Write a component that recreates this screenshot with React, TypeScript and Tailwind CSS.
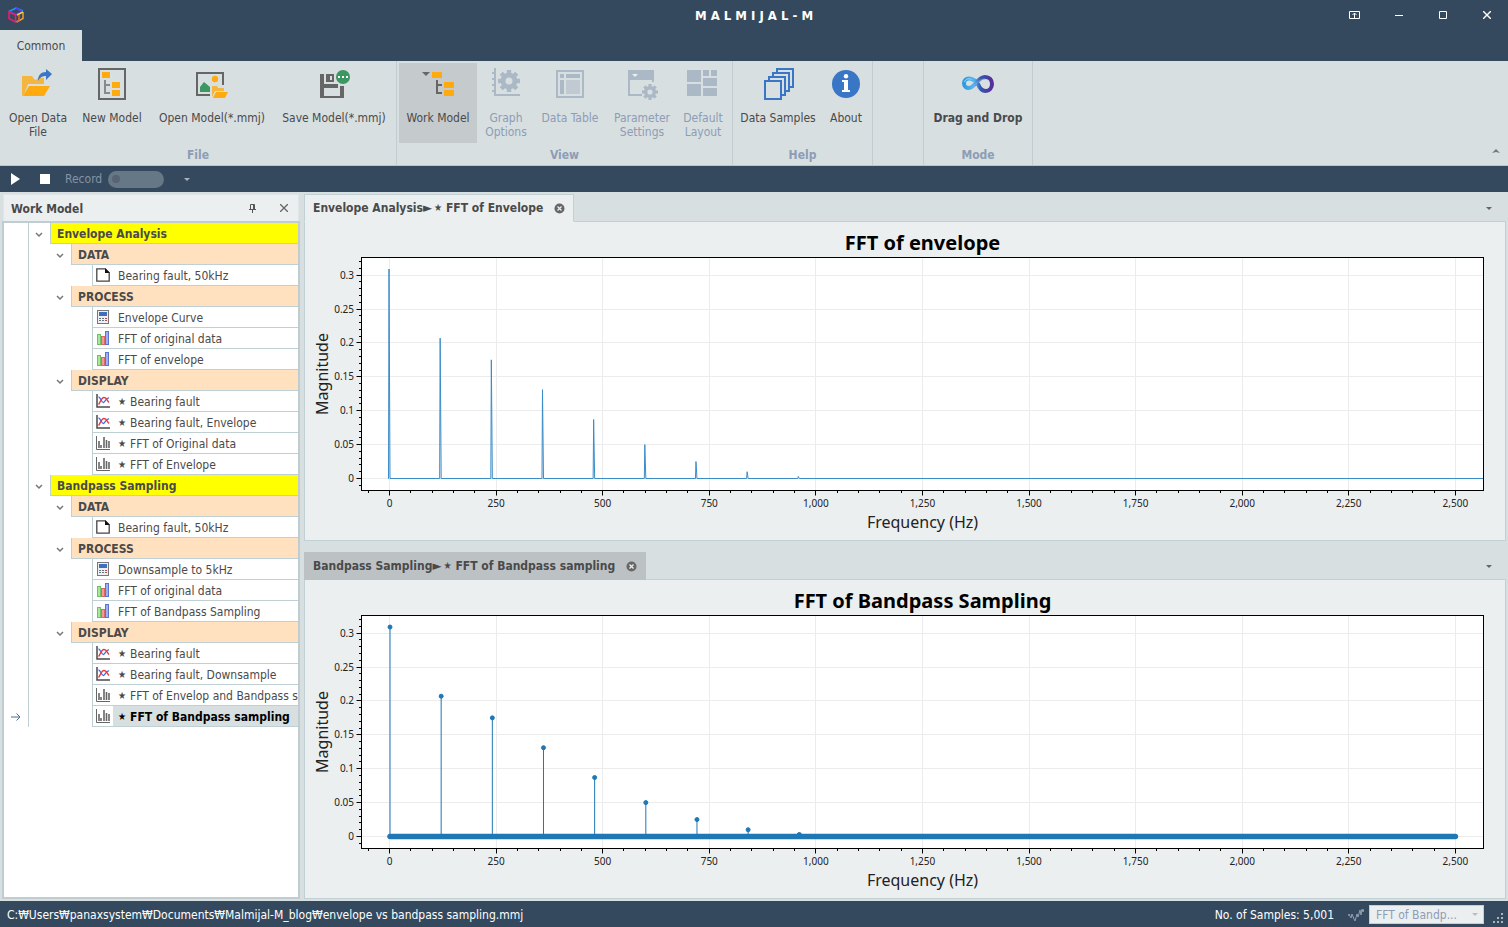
import { useEffect, useRef, useState } from "react";
import type { ReactNode } from "react";

/* ---------- ribbon icons ---------- */

function Icon32({ children }: { children: ReactNode }) {
  return (
    <svg width="32" height="32" viewBox="0 0 32 32" aria-hidden="true">
      {children}
    </svg>
  );
}

function Gear({ cx, cy, r, hole }: { cx: number; cy: number; r: number; hole: number }) {
  const ring = r * 0.76;
  return (
    <g fill="#abb8c6">
      <circle cx={cx} cy={cy} r={(ring + hole) / 2} fill="none" stroke="#abb8c6" strokeWidth={ring - hole} />
      {[0, 45, 90, 135, 180, 225, 270, 315].map((a) => (
        <rect
          key={a}
          x={cx - r * 0.2}
          y={cy - r}
          width={r * 0.4}
          height={r * 0.36}
          transform={`rotate(${a} ${cx} ${cy})`}
        />
      ))}
    </g>
  );
}

const OpenDataIcon = () => (
  <Icon32>
    <path d="M0 8h10l2 3 2 1 2-2h6v6H6L2 27 0 28z" fill="#f5b640" />
    <path d="M7 18h21l-6 10H1z" fill="#ffab0f" />
    <path d="M16 13c0-6 3-9 8-9V1l6 5-6 6V8c-3 0-6 1-8 5z" fill="#3a76c6" />
  </Icon32>
);

const NewModelIcon = () => (
  <Icon32>
    <rect x="3" y="1" width="26" height="30" fill="none" stroke="#666" strokeWidth="2" />
    <path d="M6 4h8v6H6zM16 14h8v6h-8zM16 22h8v6h-8z" fill="#ffab0f" />
    <path d="M9 12v13h5M9 17h5" fill="none" stroke="#8a8a8a" strokeWidth="2" />
  </Icon32>
);

const OpenModelIcon = () => (
  <Icon32>
    <path d="M14 27H1V5h26v12" fill="none" stroke="#666" strokeWidth="2" />
    <circle cx="19" cy="11" r="3.2" fill="#ffab0f" />
    <path d="M4 24v-5l4-5 6 5v5z" fill="#3c9763" />
    <path d="M16 18h5l1 2h6v3h-9l-3 6z" fill="#f5b640" />
    <path d="M20 24h12l-3 6H17z" fill="#ffab0f" />
  </Icon32>
);

const SaveModelIcon = () => (
  <Icon32>
    <path d="M2 6h4v10h14v4H6v8h16V18h4v12H2z" fill="#666" />
    <path d="M8 6h8v8H8zM12 8v4h2V8z" fill="#666" fillRule="evenodd" />
    <circle cx="25" cy="9" r="7" fill="#3c9763" />
    <path d="M20 8h2v2h-2zM24 8h2v2h-2zM28 8h2v2h-2z" fill="#fff" />
  </Icon32>
);

const WorkModelIcon = () => (
  <Icon32>
    <path d="M0 4h8L4 8z" fill="#666" />
    <path d="M10 4h10v6H10zM22 14h10v6H22zM22 22h10v6H22z" fill="#ffab0f" />
    <path d="M15 12v13h5M15 17h5" fill="none" stroke="#666" strokeWidth="2" />
  </Icon32>
);

const GraphOptionsIcon = () => (
  <Icon32>
    <path d="M5 0v27h25M2 5h3M2 11h3M2 17h3M2 23h3" fill="none" stroke="#abb8c6" strokeWidth="2" />
    <Gear cx={19} cy={13} r={11} hole={3.5} />
  </Icon32>
);

const DataTableIcon = () => (
  <Icon32>
    <rect x="3" y="3" width="26" height="26" fill="none" stroke="#abb8c6" strokeWidth="2" />
    <path d="M6 6h4v4H6zM12 6h14v4H12zM6 12h4v14H6z" fill="#abb8c6" />
    <path d="M12 12h14v14H12z" fill="#c1cad3" />
  </Icon32>
);

const ParameterIcon = () => (
  <Icon32>
    <path d="M2 2h26v12h-2v-2H4v14h12v2H2z" fill="#abb8c6" />
    <path d="M6 6h6l-3 3z" fill="#eceff0" />
    <Gear cx={24} cy={24} r={8} hole={2.6} />
  </Icon32>
);

const LayoutIcon = () => (
  <Icon32>
    <path
      d="M0 2h14v12H0zM0 16h14v12H0zM16 2h6v6h-6zM24 2h6v6h-6zM16 10h14v8H16zM16 20h14v8H16z"
      fill="#abb8c6"
    />
  </Icon32>
);

const SamplesIcon = () => (
  <Icon32>
    {[14, 10, 6, 2].map((x) => (
      <rect key={x} x={x + 1} y={15 - x} width="16" height="18" fill="#d8dfe1" stroke="#3a76c6" strokeWidth="2" />
    ))}
  </Icon32>
);

const AboutIcon = () => (
  <Icon32>
    <circle cx="16" cy="16" r="14" fill="#3a76c6" />
    <circle cx="16" cy="8.2" r="2.2" fill="#fff" />
    <path d="M12 12h6v10h2v2h-8v-2h2v-8h-2z" fill="#fff" />
  </Icon32>
);

const InfinityIcon = () => (
  <Icon32>
    <defs>
      <linearGradient id="loop" x1="0" x2="1" y1="0" y2="0">
        <stop offset="0" stopColor="#2f9be0" />
        <stop offset="0.35" stopColor="#5bb6ec" />
        <stop offset="0.6" stopColor="#3556ad" />
        <stop offset="1" stopColor="#5a2c9c" />
      </linearGradient>
    </defs>
    <path
      d="M16 16C12.500 11.500 10 10.500 7 10.500c-3.500 0-5 2.500-5 5s2 4.500 5 4.500c6 0 8-11 16-11 4.500 0 7 3 7 7s-2.500 7-6.500 7c-3.500 0-6-3-7.500-7z"
      fill="none"
      stroke="url(#loop)"
      strokeWidth="4"
    />
    <path d="M2.500 14c1-3 4-4 7-2.500" fill="none" stroke="#a5dbf7" strokeWidth="1" />
    <path d="M12 19c3-4 6-8 11-8" fill="none" stroke="#8d9fe0" strokeWidth="1" />
  </Icon32>
);

/* ---------- ribbon ---------- */

type RibbonButtonProps = {
  icon: ReactNode;
  lines: string[];
  width: string;
  disabled?: boolean;
  pressed?: boolean;
  bold?: boolean;
};

function RibbonButton({ icon, lines, width, disabled, pressed, bold }: RibbonButtonProps) {
  return (
    <button
      type="button"
      disabled={disabled}
      aria-pressed={pressed}
      className={`flex h-20 shrink-0 flex-col items-center pt-[5px] leading-[14px] ${width} ${
        pressed ? "bg-[#c5cacd]" : ""
      } ${disabled ? "text-[#8c9db5]" : "text-[#4a4a4a]"} ${bold ? "font-bold" : ""}`}
    >
      {icon}
      <span className="mt-[11px] flex flex-col items-center whitespace-nowrap">
        {lines.map((l) => (
          <span key={l}>{l}</span>
        ))}
      </span>
    </button>
  );
}

function RibbonGroup({ label, pad, children }: { label: string; pad: string; children: ReactNode }) {
  return (
    <section aria-label={label} className="flex flex-col border-r border-[#c3cdd1] pt-[2px]">
      <div className={`flex ${pad}`}>{children}</div>
      <div className="flex flex-1 items-center justify-center pt-[2px] font-bold text-[#8c9db5]">{label}</div>
    </section>
  );
}

/* ---------- tree ---------- */

const FileIcon = () => (
  <svg width="14" height="14" viewBox="0 0 14 14" aria-hidden="true">
    <path d="M.8.800h8.400l4 4v8.400H.8z" fill="#fff" stroke="#444" strokeWidth="1.300" />
    <path d="M9 0l5 5H9z" fill="#111" />
  </svg>
);

const CalcIcon = () => (
  <svg width="14" height="14" viewBox="0 0 14 14" aria-hidden="true">
    <rect x="1.500" y=".5" width="11" height="13" fill="#eef0f3" stroke="#777" />
    <rect x="3" y="2" width="8" height="4" fill="#3f70bd" />
    <path d="M3 8h2v1H3zM6 8h2v1H6zM3 10h2v1H3zM6 10h2v1H6z" fill="#6a7280" />
    <path d="M9 8h2v1H9zM9 10h2v1H9z" fill="#b44a4a" />
  </svg>
);

const BarsIcon = () => (
  <svg width="14" height="14" viewBox="0 0 14 14" aria-hidden="true">
    <rect x="1.500" y="3.500" width="3" height="10" fill="#a9e79c" stroke="#6cc260" />
    <rect x="5.500" y="5.500" width="3" height="8" fill="#f39a94" stroke="#d66a6a" />
    <rect x="9.500" y=".5" width="3" height="13" fill="#9fb1f2" stroke="#5c73cf" />
  </svg>
);

const CurveIcon = () => (
  <svg width="14" height="14" viewBox="0 0 14 14" aria-hidden="true" fill="none">
    <path d="M1 0v13h13" stroke="#4a4a4a" strokeWidth="1.500" />
    <path d="M2.500 3c2 0 3 6 5 5.500S10 3.500 13 4" stroke="#3c6fe0" strokeWidth="1.300" />
    <path d="M2.500 10.500C4 9.500 5 3.500 8 3.500S11 7 13 8.500" stroke="#e8383c" strokeWidth="1.300" />
  </svg>
);

const SpectrumIcon = () => (
  <svg width="14" height="14" viewBox="0 0 14 14" aria-hidden="true" fill="none">
    <path d="M.5 0v13.500H14" stroke="#666" />
    <path d="M3 5v7M5 9v3M8 1v11M10.500 4v8M13 5v7" stroke="#666" strokeWidth="1.600" />
  </svg>
);

const leafIcons = { file: FileIcon, calc: CalcIcon, bars: BarsIcon, curve: CurveIcon, spectrum: SpectrumIcon };

type Leaf = { icon: keyof typeof leafIcons; text: string; star?: boolean; selected?: boolean };
type Branch = { name: string; items: Leaf[] };
type Model = { name: string; branches: Branch[] };

const models: Model[] = [
  {
    name: "Envelope Analysis",
    branches: [
      { name: "DATA", items: [{ icon: "file", text: "Bearing fault, 50kHz" }] },
      {
        name: "PROCESS",
        items: [
          { icon: "calc", text: "Envelope Curve" },
          { icon: "bars", text: "FFT of original data" },
          { icon: "bars", text: "FFT of envelope" },
        ],
      },
      {
        name: "DISPLAY",
        items: [
          { icon: "curve", text: "Bearing fault", star: true },
          { icon: "curve", text: "Bearing fault, Envelope", star: true },
          { icon: "spectrum", text: "FFT of Original data", star: true },
          { icon: "spectrum", text: "FFT of Envelope", star: true },
        ],
      },
    ],
  },
  {
    name: "Bandpass Sampling",
    branches: [
      { name: "DATA", items: [{ icon: "file", text: "Bearing fault, 50kHz" }] },
      {
        name: "PROCESS",
        items: [
          { icon: "calc", text: "Downsample to 5kHz" },
          { icon: "bars", text: "FFT of original data" },
          { icon: "bars", text: "FFT of Bandpass Sampling" },
        ],
      },
      {
        name: "DISPLAY",
        items: [
          { icon: "curve", text: "Bearing fault", star: true },
          { icon: "curve", text: "Bearing fault, Downsample", star: true },
          { icon: "spectrum", text: "FFT of Envelop and Bandpass sampling", star: true },
          { icon: "spectrum", text: "FFT of Bandpass sampling", star: true, selected: true },
        ],
      },
    ],
  },
];

function Gutter({ current }: { current?: boolean }) {
  return (
    <span className="flex w-[25px] shrink-0 items-center justify-center border-r border-[#bfd0d5]">
      {current && (
        <svg width="10" height="8" viewBox="0 0 10 8" fill="none" stroke="#4d6d94" aria-hidden="true">
          <path d="M0 4h9M5.500.5L9 4 5.500 7.500" />
        </svg>
      )}
    </span>
  );
}

function Expander({ name }: { name: string }) {
  return (
    <button
      type="button"
      aria-label={`Collapse ${name}`}
      className="flex w-[21px] shrink-0 items-center justify-center pt-[2px] pr-[2px]"
    >
      <svg width="8" height="6" viewBox="0 0 8 6" fill="none" stroke="#777" strokeWidth="1.500" aria-hidden="true">
        <path d="M1 1l3 3 3-3" />
      </svg>
    </button>
  );
}

function LeafRow({ leaf }: { leaf: Leaf }) {
  const Glyph = leafIcons[leaf.icon];
  return (
    <li className="flex h-[21px]">
      <Gutter current={leaf.selected} />
      <span className="w-[63px] shrink-0" />
      <span className="flex min-w-0 flex-1 border-b border-l border-[#bfd0d5]">
        <span className="flex w-5 shrink-0 items-center pl-[3px]">
          <Glyph />
        </span>
        <span
          className={`flex min-w-0 flex-1 items-center overflow-hidden pt-[2px] pl-[5px] whitespace-nowrap ${
            leaf.selected ? "bg-[#d8dfe1] font-bold text-black" : ""
          }`}
        >
          {leaf.star && <span className="w-3 shrink-0 text-[10px] leading-3">★</span>}
          {leaf.text}
        </span>
      </span>
    </li>
  );
}

function Tree() {
  return (
    <ul className="flex-1 overflow-hidden border-2 border-[#bfcdd0] bg-white">
      {models.map((m) => (
        <li key={m.name}>
          <div className="flex h-[21px]">
            <Gutter />
            <Expander name={m.name} />
            <span className="flex flex-1 items-center border-b border-l border-[#bfd0d5] bg-[#ffff00] pt-[2px] pl-[6px] font-bold">
              {m.name}
            </span>
          </div>
          <ul>
            {m.branches.map((b) => (
              <li key={b.name}>
                <div className="flex h-[21px]">
                  <Gutter />
                  <span className="w-[21px] shrink-0" />
                  <Expander name={b.name} />
                  <span className="flex flex-1 items-center border-b border-l border-[#bfd0d5] bg-[#ffe1c0] pt-[2px] pl-[6px] font-bold">
                    {b.name}
                  </span>
                </div>
                <ul>
                  {b.items.map((leaf) => (
                    <LeafRow key={leaf.text} leaf={leaf} />
                  ))}
                </ul>
              </li>
            ))}
          </ul>
        </li>
      ))}
    </ul>
  );
}

/* ---------- charts ---------- */

const peaks = [0.309, 0.207, 0.175, 0.131, 0.087, 0.05, 0.025, 0.01, 0.003];
const xMin = -65.7;
const xMax = 2566;
const yMin = -0.0177;
const yMax = 0.326;

function Chart({ title, stems }: { title: string; stems?: boolean }) {
  const host = useRef<HTMLDivElement>(null);
  const [size, setSize] = useState({ w: 1200, h: 318 });

  useEffect(() => {
    const el = host.current;
    if (!el) return;
    const update = () => setSize({ w: el.clientWidth, h: el.clientHeight });
    update();
    const observer = new ResizeObserver(update);
    observer.observe(el);
    return () => observer.disconnect();
  }, []);

  const left = 56.5;
  const top = 35.5;
  const right = size.w - 21.5;
  const bottom = size.h - 49.5;
  const px = (v: number) => left + ((v - xMin) / (xMax - xMin)) * (right - left);
  const py = (v: number) => bottom - ((v - yMin) / (yMax - yMin)) * (bottom - top);
  const snap = (v: number) => Math.floor(v) + 0.5;

  const xMajor = Array.from({ length: 11 }, (_, i) => i * 250);
  const xMinor = Array.from({ length: 52 }, (_, i) => (i - 1) * 50);
  const yMajor = Array.from({ length: 7 }, (_, i) => i * 0.05);
  const yMinor = Array.from({ length: 34 }, (_, i) => (i - 1) * 0.01);
  const midX = (left + right) / 2;
  const midY = (top + bottom) / 2;
  const base = py(0);

  const line = peaks
    .map((p, i) => {
      const x = px(i * 120);
      return `L${x - 1} ${base} L${x - 0.5} ${py(p)} L${x + 0.5} ${base}`;
    })
    .join(" ");

  return (
    <div ref={host} className="h-full min-h-0 w-full overflow-hidden">
      <svg
        width={size.w}
        height={size.h}
        role="img"
        aria-label={title}
        className="block font-['Noto_Sans',sans-serif]"
        fill="#000"
      >
        <text x={midX} y="28" textAnchor="middle" className="text-[20px] font-bold">
          {title}
        </text>
        <rect x={left} y={top} width={right - left} height={bottom - top} fill="#fff" />
        <g stroke="#ececec">
          {xMajor.map((v) => (
            <path key={v} d={`M${snap(px(v))} ${top}V${bottom}`} />
          ))}
          {yMajor.map((v) => (
            <path key={v} d={`M${left} ${snap(py(v))}H${right}`} />
          ))}
        </g>
        <g stroke="#000">
          {xMinor.map((v) => (
            <path key={v} d={`M${snap(px(v))} ${bottom}v2.500`} />
          ))}
          {xMajor.map((v) => (
            <path key={v} d={`M${snap(px(v))} ${bottom}v5`} />
          ))}
          {yMinor.map((v) => (
            <path key={v} d={`M${left} ${snap(py(v))}h-2.500`} />
          ))}
          {yMajor.map((v) => (
            <path key={v} d={`M${left} ${snap(py(v))}h-5`} />
          ))}
        </g>
        {stems ? (
          <g fill="#1f77b4" stroke="#1f77b4">
            {peaks.map((p, i) => (
              <g key={p}>
                <path d={`M${px(i * 120) + 0.5} ${base}V${py(p)}`} />
                <circle cx={px(i * 120) + 0.5} cy={py(p)} r="2" />
              </g>
            ))}
            <path d={`M${px(0) + 0.5} ${base}H${px(2500)}`} strokeWidth="5.500" strokeLinecap="round" />
          </g>
        ) : (
          <path
            d={`M${px(0) - 0.5} ${base} ${line} L${right} ${base}`}
            fill="none"
            stroke="#3a8cc8"
            strokeLinejoin="bevel"
          />
        )}
        <rect x={left} y={top} width={right - left} height={bottom - top} fill="none" stroke="#000" />
        <g className="text-[10px]" fill="#222">
          {xMajor.map((v) => (
            <text key={v} x={px(v)} y={bottom + 16} textAnchor="middle">
              {v.toLocaleString("en-US")}
            </text>
          ))}
          {yMajor.map((v) => (
            <text key={v} x={left - 7.5} y={py(v) + 3.5} textAnchor="end">
              {Number(v.toFixed(2))}
            </text>
          ))}
        </g>
        <g className="text-[16px]" fill="#222">
          <text x={midX} y={bottom + 37} textAnchor="middle">
            Frequency (Hz)
          </text>
          <text x="23" y={midY} textAnchor="middle" transform={`rotate(-90 23 ${midY})`}>
            Magnitude
          </text>
        </g>
      </svg>
    </div>
  );
}

function Caret() {
  return (
    <svg width="6" height="3" viewBox="0 0 6 3" aria-hidden="true">
      <path d="M0 0h6L3 3z" fill="currentColor" />
    </svg>
  );
}

type DocumentProps = { model: string; name: string; active?: boolean; children: ReactNode };

function DocumentPane({ model, name, active, children }: DocumentProps) {
  return (
    <section className="flex min-h-0 flex-1 flex-col">
      <div className="flex h-[27px] shrink-0 items-start">
        <div
          className={`relative z-10 flex h-7 items-center border px-2 font-bold whitespace-nowrap ${
            active
              ? "border-[#c0d0d4] border-b-transparent bg-[#eceff0]"
              : "border-[#bcc1c4] bg-[#bcc1c4]"
          }`}
        >
          <span>{model}</span>
          <span className="w-[11px] text-[13px]">►</span>
          <span className="w-3 text-[10px]">★</span>
          <span>{name}</span>
          <button type="button" aria-label={`Close ${name}`} className="ml-[11px]">
            <svg width="11" height="11" viewBox="0 0 11 11" aria-hidden="true">
              <circle cx="5.500" cy="5.500" r="5" fill="#666" />
              <path d="M3.500 3.500l4 4M7.500 3.500l-4 4" stroke="#eceff0" strokeWidth="1.300" />
            </svg>
          </button>
        </div>
        <button type="button" aria-label="Window list" className="ml-auto flex h-7 items-center px-[14px] text-[#666]">
          <Caret />
        </button>
      </div>
      <div className="min-h-0 flex-1 border border-[#c0d0d4] bg-[#eceff0]">{children}</div>
    </section>
  );
}

/* ---------- window ---------- */

export default function App() {
  return (
    <div className="flex h-screen min-h-[600px] flex-col overflow-hidden bg-[#d8dfe1] font-['DejaVu_Sans_Condensed','Noto_Sans','Noto_Sans_CJK_KR',sans-serif] text-[12px] leading-[14px] text-[#4a4a4a]">
      <header className="shrink-0 bg-[#34495e]">
        <div className="grid h-[30px] grid-cols-3 items-center">
          <svg className="ml-2" width="16" height="16" viewBox="0 0 16 16" fill="none" strokeWidth="1.500" aria-hidden="true">
            <path d="M1 4.500L8 1l7 3" stroke="#2196f3" />
            <path d="M1.500 4.500L8 7.500l6.500-3M8 1l6 3.500" stroke="#5a3df0" />
            <path d="M1 5v6.500l6.500 3.500V8z" stroke="#e91e73" />
            <path d="M15 5v6.500L8.500 15" stroke="#f59a23" />
            <path d="M9 8l6-3" stroke="#f5d423" />
            <path d="M9 14.500l2-1V8" stroke="#e06a2a" />
          </svg>
          <h1 className="pt-px text-center text-[13px] font-bold text-white">M A L M I J A L - M</h1>
          <div className="-mr-px flex justify-end text-white">
            <button type="button" aria-label="Ribbon display options" className="flex w-11 justify-center">
              <svg width="11" height="8" viewBox="0 0 11 8" fill="none" stroke="currentColor" aria-hidden="true">
                <path d="M.5.500h10v7H.5zM5.500 7V2M3.500 4l2-2 2 2" />
              </svg>
            </button>
            <button type="button" aria-label="Minimize" className="flex w-11 items-center justify-center">
              <svg width="8" height="1" viewBox="0 0 8 1" aria-hidden="true">
                <path d="M0 0h8v1H0z" fill="currentColor" />
              </svg>
            </button>
            <button type="button" aria-label="Maximize" className="flex w-11 justify-center">
              <svg width="8" height="8" viewBox="0 0 8 8" fill="none" stroke="currentColor" aria-hidden="true">
                <path d="M.5.500h7v7h-7z" />
              </svg>
            </button>
            <button type="button" aria-label="Close" className="flex w-11 justify-center">
              <svg width="8" height="8" viewBox="0 0 8 8" stroke="currentColor" strokeWidth="1.400" aria-hidden="true">
                <path d="M0 0l8 8M8 0L0 8" />
              </svg>
            </button>
          </div>
        </div>
        <nav className="flex h-[31px]">
          <button type="button" className="w-[82px] bg-[#d8dfe1]">
            Common
          </button>
        </nav>
      </header>

      <div className="flex h-[105px] shrink-0 border-b border-[#b8c6cb]">
        <RibbonGroup label="File" pad="pr-1">
          <RibbonButton width="w-[76px]" icon={<OpenDataIcon />} lines={["Open Data", "File"]} />
          <RibbonButton width="w-[72px]" icon={<NewModelIcon />} lines={["New Model"]} />
          <RibbonButton width="w-[128px]" icon={<OpenModelIcon />} lines={["Open Model(*.mmj)"]} />
          <RibbonButton width="w-[116px]" icon={<SaveModelIcon />} lines={["Save Model(*.mmj)"]} />
        </RibbonGroup>
        <RibbonGroup label="View" pad="pl-[2px] pr-[5px]">
          <RibbonButton width="w-[78px]" icon={<WorkModelIcon />} lines={["Work Model"]} pressed />
          <RibbonButton width="w-[58px]" icon={<GraphOptionsIcon />} lines={["Graph", "Options"]} disabled />
          <RibbonButton width="w-[70px]" icon={<DataTableIcon />} lines={["Data Table"]} disabled />
          <RibbonButton width="w-[74px]" icon={<ParameterIcon />} lines={["Parameter", "Settings"]} disabled />
          <RibbonButton width="w-[48px]" icon={<LayoutIcon />} lines={["Default", "Layout"]} disabled />
        </RibbonGroup>
        <RibbonGroup label="Help" pad="pl-px pr-[2px]">
          <RibbonButton width="w-[88px]" icon={<SamplesIcon />} lines={["Data Samples"]} />
          <RibbonButton width="w-[48px]" icon={<AboutIcon />} lines={["About"]} />
        </RibbonGroup>
        <div className="w-[51px] border-r border-[#c3cdd1]" />
        <RibbonGroup label="Mode" pad="">
          <RibbonButton width="w-[108px]" icon={<InfinityIcon />} lines={["Drag and Drop"]} bold />
        </RibbonGroup>
        <button type="button" aria-label="Collapse the ribbon" className="mt-auto ml-auto px-2 pb-3 text-[#777]">
          <svg width="8" height="4" viewBox="0 0 8 4" aria-hidden="true">
            <path d="M0 4l4-4 4 4-4-1z" fill="currentColor" />
          </svg>
        </button>
      </div>

      <div className="flex h-[26px] shrink-0 items-center bg-[#34495e] text-[#8593a5]">
        <button type="button" aria-label="Run" className="ml-[11px]">
          <svg width="9" height="12" viewBox="0 0 9 12" aria-hidden="true">
            <path d="M0 0l9 6-9 6z" fill="#fff" />
          </svg>
        </button>
        <button type="button" aria-label="Stop" className="ml-5 size-[10px] bg-white" />
        <label htmlFor="record" className="ml-[15px] w-[43px]">
          Record
        </label>
        <span className="relative flex">
          <input
            id="record"
            type="checkbox"
            role="switch"
            disabled
            className="h-[17px] w-14 appearance-none rounded-full bg-[#667785]"
          />
          <span className="pointer-events-none absolute top-1 left-1 size-2 rounded-full bg-[#566571]" />
        </span>
        <button type="button" aria-label="Toolbar options" className="ml-5 text-[#a9b4be]">
          <Caret />
        </button>
      </div>

      <main className="flex min-h-0 flex-1 gap-1 p-[2px]">
        <aside className="flex w-[298px] shrink-0 flex-col">
          <div className="mx-px flex h-[27px] shrink-0 items-center border border-b-0 border-[#e0e6e8] bg-[#eceff0] pl-[7px]">
            <h2 className="pt-px font-bold">Work Model</h2>
            <button type="button" aria-label="Auto hide" className="ml-auto">
              <svg width="7" height="9" viewBox="0 0 7 9" fill="none" stroke="#555" aria-hidden="true">
                <path d="M1.500 5V.5h4V5M0 5.500h7M3.500 6v3M4.500 1v4" />
              </svg>
            </button>
            <button type="button" aria-label="Close Work Model" className="mr-[10px] ml-6">
              <svg width="8" height="8" viewBox="0 0 8 8" stroke="#666" strokeWidth="1.300" aria-hidden="true">
                <path d="M0 0l8 8M8 0L0 8" />
              </svg>
            </button>
          </div>
          <Tree />
        </aside>
        <div className="flex min-w-0 flex-1 flex-col gap-[11px]">
          <DocumentPane model="Envelope Analysis" name="FFT of Envelope" active>
            <Chart title="FFT of envelope" />
          </DocumentPane>
          <DocumentPane model="Bandpass Sampling" name="FFT of Bandpass sampling">
            <Chart title="FFT of Bandpass Sampling" stems />
          </DocumentPane>
        </div>
      </main>

      <footer className="flex h-[26px] shrink-0 items-center bg-[#34495e] pt-px pl-[7px] text-white">
        <span>C:₩Users₩panaxsystem₩Documents₩Malmijal-M_blog₩envelope vs bandpass sampling.mmj</span>
        <label htmlFor="series" className="ml-auto">
          No. of Samples: 5,001
        </label>
        <svg className="mx-[5px] ml-[14px]" width="16" height="14" viewBox="0 0 16 14" fill="none" stroke="#8fa0b0" aria-hidden="true">
          <path d="M0 8l1-2 2 4 1-4 2 5 1 2 2-7 1 3 2-7 1 5 1-6 1 3 1-3" />
        </svg>
        <span className="relative flex items-center text-[#8c9db5]">
          <select
            id="series"
            disabled
            className="h-[19px] w-[115px] appearance-none border border-[#c0d0d4] bg-[#eceff0] pl-[6px] opacity-100"
          >
            <option>FFT of Bandp...</option>
          </select>
          <span className="pointer-events-none absolute right-[6px] text-[#b5bec6]">
            <Caret />
          </span>
        </span>
        <svg className="mr-[5px] ml-[9px] self-end pb-1" width="10" height="14" viewBox="0 0 10 10" fill="#a9b4be" aria-hidden="true">
          <path d="M8 0h2v2H8zM4 4h2v2H4zM8 4h2v2H8zM0 8h2v2H0zM4 8h2v2H4zM8 8h2v2H8z" />
        </svg>
      </footer>
    </div>
  );
}
